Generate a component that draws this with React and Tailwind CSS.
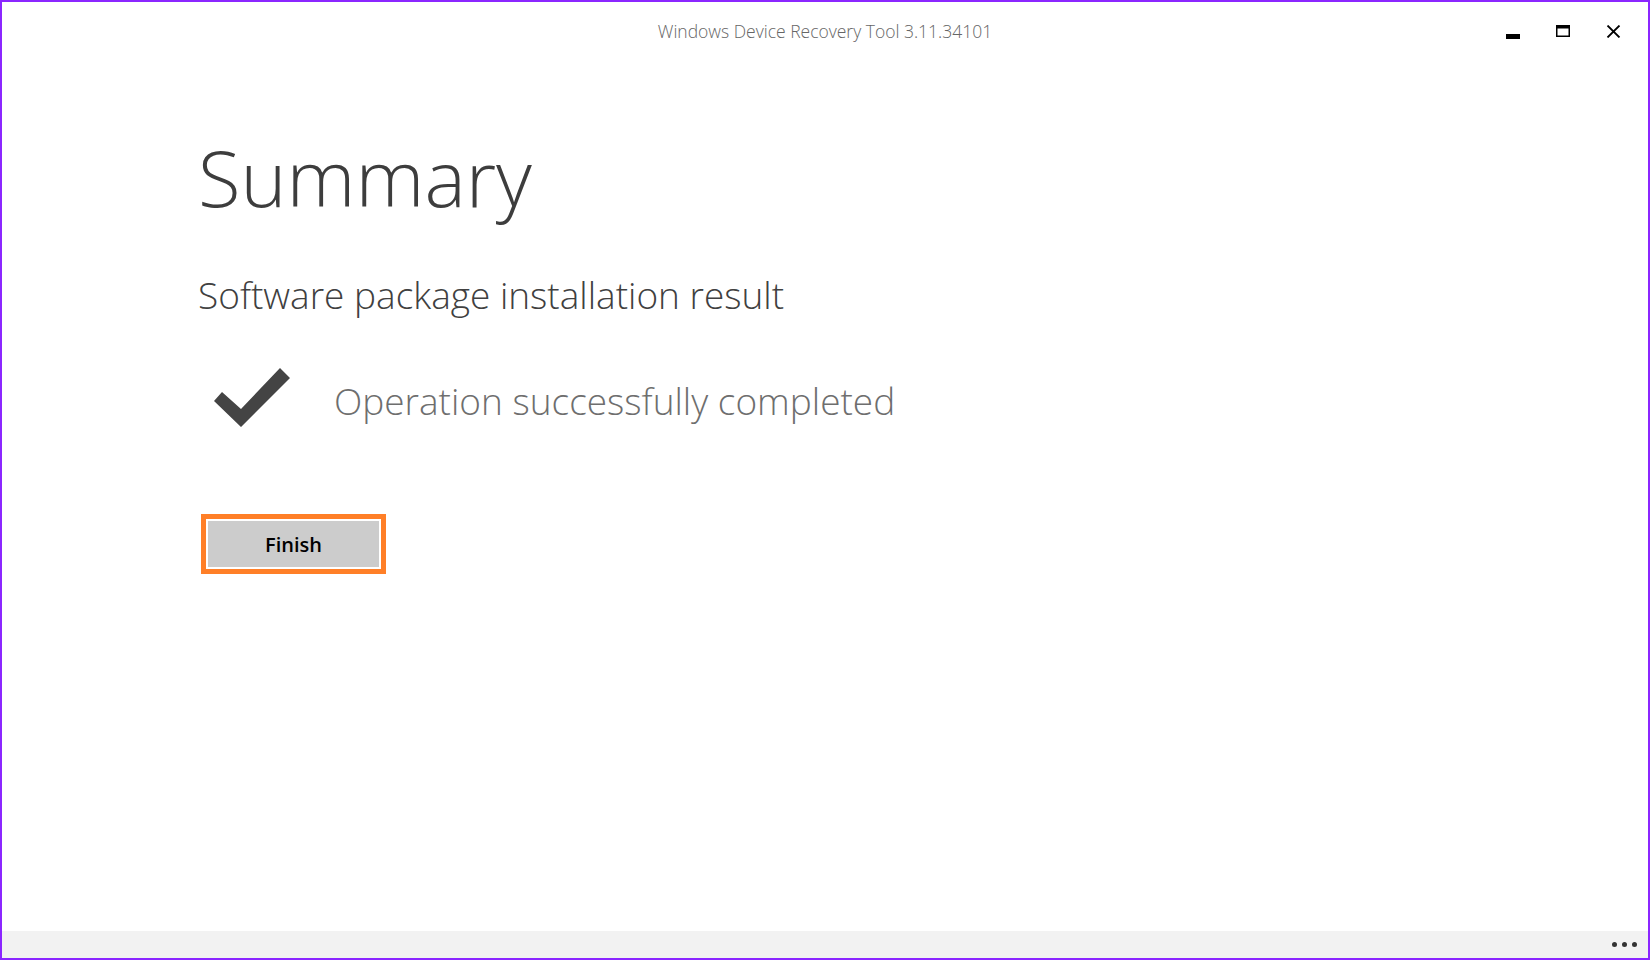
import React from 'react';

const font = { fontFamily: '"Open Sans", "Noto Sans", sans-serif' };

const TitleControls = () => (
  <div className="flex items-center justify-end pr-[27px] gap-[36px]">
    {/* minimize */}
    <svg width="14" height="14" viewBox="0 0 14 14" className="mt-[6px]">
      <rect x="0" y="7" width="14" height="5" fill="#000" />
    </svg>
    {/* maximize */}
    <svg width="14" height="12" viewBox="0 0 14 12">
      <rect x="0.75" y="0.75" width="12.5" height="10.5" fill="none" stroke="#000" strokeWidth="1.5" />
      <rect x="0" y="0" width="14" height="3.5" fill="#000" />
    </svg>
    {/* close */}
    <svg width="15" height="13" viewBox="0 0 15 13">
      <path d="M1.5 0.5 L13.5 12.5 M13.5 0.5 L1.5 12.5" stroke="#000" strokeWidth="1.8" fill="none" />
    </svg>
  </div>
);

const CheckMark = () => (
  <svg width="76" height="59" viewBox="0 0 76 59" className="ml-[16px] shrink-0">
    <polygon points="0,33 8,24 27,41 66,0 76,10 27,59" fill="#444444" />
  </svg>
);

export default function App() {
  return (
    <div
      className="w-[1650px] h-[960px] border-2 border-[#8b26ff] bg-white flex flex-col overflow-hidden"
      style={font}
    >
      {/* Title bar */}
      <div className="h-[58px] grid grid-cols-[1fr_auto_1fr] items-center">
        <div />
        <div className="text-[17.5px] font-light text-[#666666] mt-[1px]">
          Windows Device Recovery Tool 3.11.34101
        </div>
        <TitleControls />
      </div>

      {/* Content */}
      <div className="flex flex-col items-start pl-[196px]">
        <h1 className="mt-[78px] text-[78px] leading-none font-light text-[#3d3d3d]">Summary</h1>
        <h2 className="mt-[60px] text-[37px] leading-none font-light text-[#404040]">
          Software package installation result
        </h2>

        <div className="mt-[55px] flex items-start">
          <CheckMark />
          <div className="ml-[44px] mt-[14px] text-[37px] leading-none font-light text-[#6e6e6e]">
            Operation successfully completed
          </div>
        </div>

        <button className="mt-[87px] ml-[3px] w-[185px] h-[60px] border-[5px] border-[#ff7f27] bg-white p-0">
          <div className="w-full h-full border-2 border-white bg-[#cccccc] flex items-center justify-center pt-[2px] text-[20px] font-semibold text-black">
            Finish
          </div>
        </button>
      </div>

      {/* Footer */}
      <div className="mt-auto h-[27px] bg-[#f2f2f2] flex items-center justify-end pr-[11px] gap-[5px]">
        <span className="w-[5px] h-[5px] rounded-full bg-[#333333]" />
        <span className="w-[5px] h-[5px] rounded-full bg-[#333333]" />
        <span className="w-[5px] h-[5px] rounded-full bg-[#333333]" />
      </div>
    </div>
  );
}
